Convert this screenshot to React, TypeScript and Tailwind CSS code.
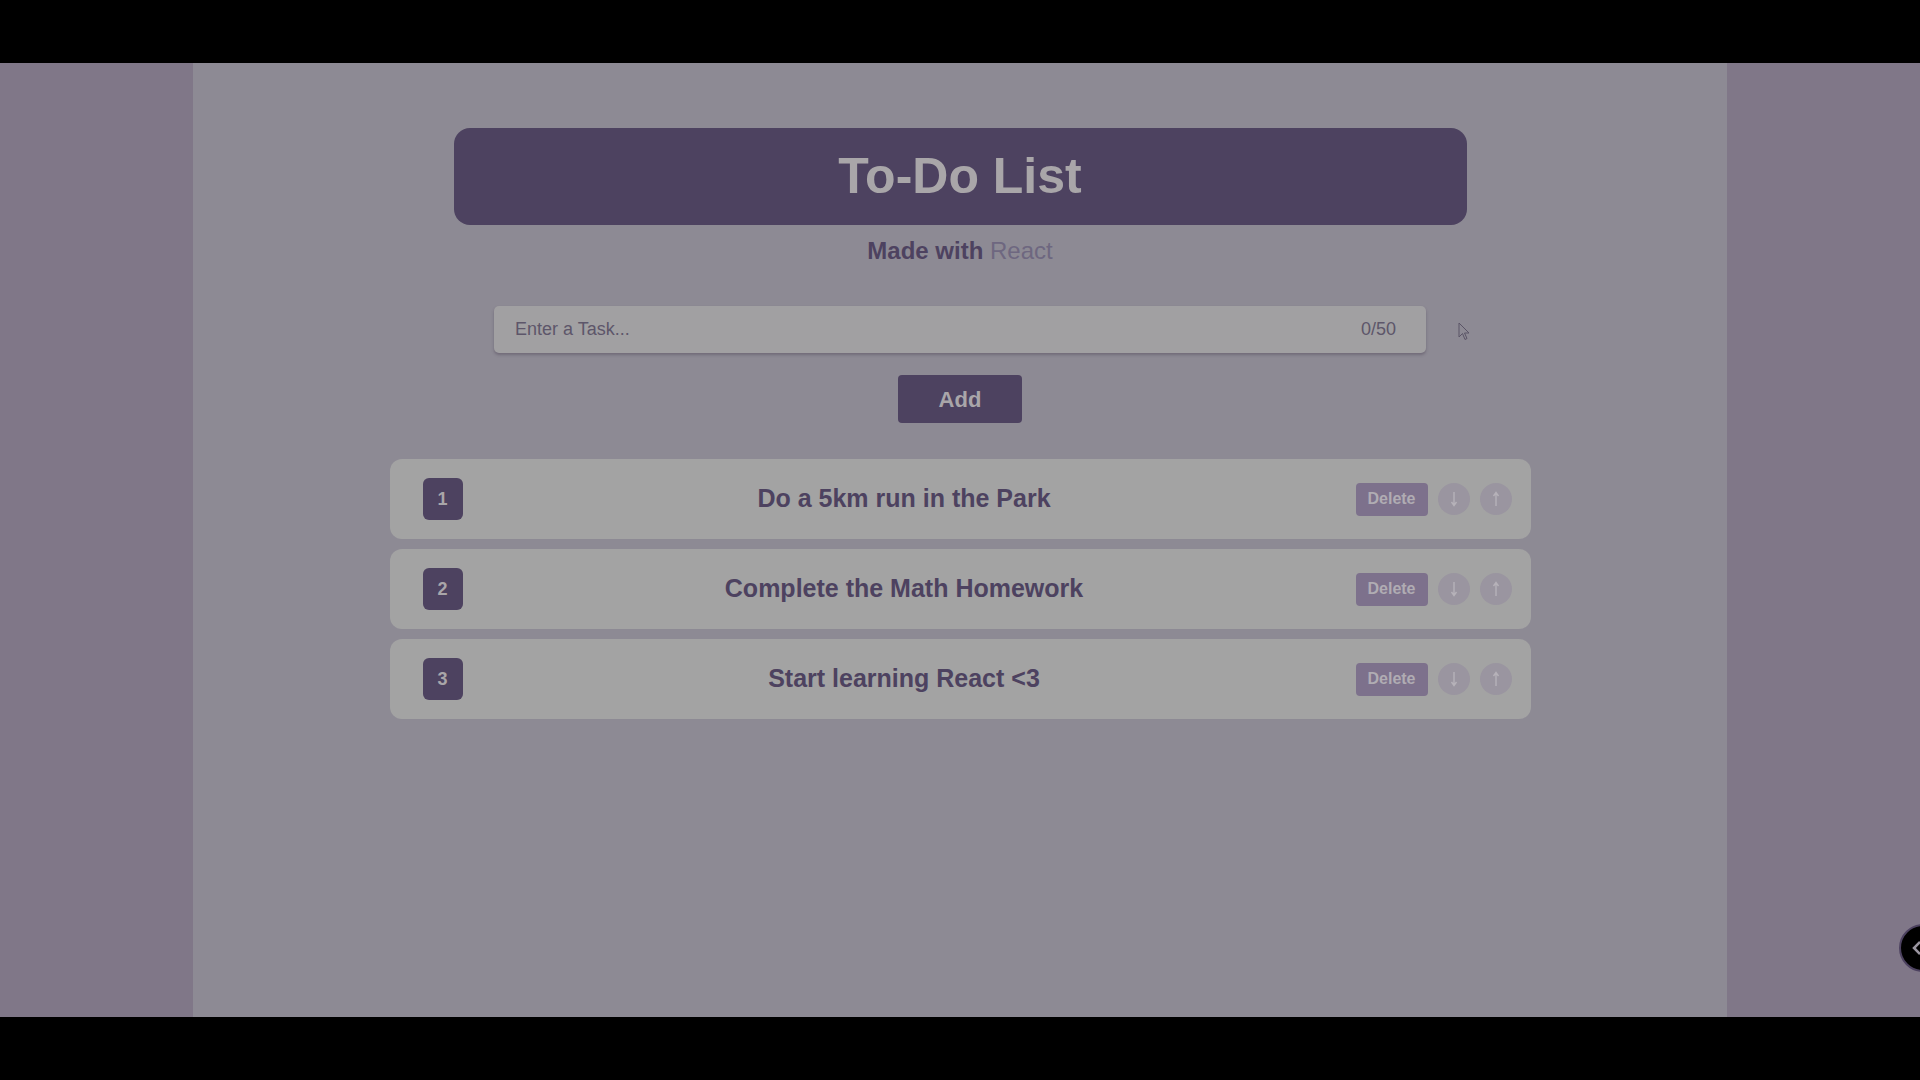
import { useState } from 'react';

interface Task {
  id: number;
  text: string;
}

const initialTasks: Task[] = [
  { id: 1, text: 'Do a 5km run in the Park' },
  { id: 2, text: 'Complete the Math Homework' },
  { id: 3, text: 'Start learning React <3' },
];

const Arrow = ({ up }: { up?: boolean }) => (
  <svg width="8" height="16" viewBox="0 0 8 16" className={up ? 'rotate-180' : ''}>
    <path d="M4 1 L4 14 M1.5 11 L4 14.5 L6.5 11" fill="none" stroke="#b6b2b9" strokeWidth="1.4" />
  </svg>
);

const TaskRow = ({ index, task }: { index: number; task: Task }) => (
  <div className="flex h-[80px] items-center rounded-[12px] bg-[#a3a3a3] pl-[33px] pr-[19px]">
    <div className="flex h-[42px] w-[40px] items-center justify-center rounded-[6px] bg-[#4d4260] text-[18px] font-bold text-[#a9a6a9]">
      {index}
    </div>
    <div className="mr-[10px] flex-1 text-center text-[25px] font-bold text-[#4d4260]">{task.text}</div>
    <div className="flex items-center">
      <button className="h-[33px] w-[72px] rounded-[4px] bg-[#7d718c] text-[16px] font-bold text-[#b0acb3]">
        Delete
      </button>
      <button className="ml-[10px] flex h-[32px] w-[32px] items-center justify-center rounded-full bg-[#9a95a0]">
        <Arrow />
      </button>
      <button className="ml-[10px] flex h-[32px] w-[32px] items-center justify-center rounded-full bg-[#9a95a0]">
        <Arrow up />
      </button>
    </div>
  </div>
);

const App = () => {
  const [task, setTask] = useState('');
  const [tasks] = useState<Task[]>(initialTasks);

  return (
    <div className="flex h-screen w-full flex-col bg-black font-['Liberation_Sans',Arial,sans-serif]">
      <div className="h-[63px] shrink-0 bg-black" />

      <div className="flex flex-1 overflow-hidden">
        {/* Left strip */}
        <div className="w-[193px] shrink-0 bg-[#807788]" />

        {/* Main panel */}
        <div className="flex flex-1 flex-col items-center bg-[#8d8a94] pt-[65px]">
          <div className="flex h-[97px] w-[1013px] items-center justify-center rounded-[16px] bg-[#4d4260]">
            <h1 className="text-[50px] font-bold text-[#a9a6a9]">To-Do List</h1>
          </div>

          <p className="mt-[8px] text-[24px] text-[#4d4260]">
            <span className="font-bold">Made with </span>
            <span className="text-[#6e6780]">React</span>
          </p>

          <div className="relative mt-[37px]">
            <div className="flex h-[47px] w-[932px] items-center rounded-[5px] bg-[#a1a0a2] pl-[21px] pr-[30px] shadow-[0_2px_3px_rgba(60,50,70,0.35)]">
              <input
                value={task}
                onChange={(e) => setTask(e.target.value.slice(0, 50))}
                placeholder="Enter a Task..."
                className="flex-1 bg-transparent text-[18px] text-[#4d4260] outline-none placeholder:text-[#5d566a]"
              />
              <span className="text-[18px] text-[#5d566a]">{task.length}/50</span>
            </div>
            {/* mouse pointer */}
            <svg className="absolute left-[964px] top-[16px]" width="12" height="19" viewBox="0 0 12 19">
              <path d="M1 1 L1 15 L4.5 11.5 L7 17.5 L9 16.5 L6.5 11 L11 11 Z" fill="#8d8a94" stroke="#5a5466" strokeWidth="1" />
            </svg>
          </div>

          <button className="mt-[22px] h-[48px] w-[124px] rounded-[4px] bg-[#4d4260] text-[22px] font-bold text-[#a9a6a9]">
            Add
          </button>

          <div className="mt-[36px] flex w-[1145px] flex-col gap-[10px] pl-[2px] pr-[2px]">
            {tasks.map((t, i) => (
              <TaskRow key={t.id} index={i + 1} task={t} />
            ))}
          </div>
        </div>

        {/* Right strip */}
        <div className="relative w-[193px] shrink-0 overflow-hidden bg-[#807788]">
          <div className="absolute left-[172px] top-[861px] flex h-[48px] w-[48px] items-center rounded-full border-2 border-[#4d4260] bg-black pl-[10px]">
            <svg width="12" height="14" viewBox="0 0 12 14">
              <path d="M9 1 L3 7 L9 13" fill="none" stroke="#9a95a0" strokeWidth="2.5" />
            </svg>
          </div>
        </div>
      </div>

      <div className="h-[63px] shrink-0 bg-black" />
    </div>
  );
};

export default App;
